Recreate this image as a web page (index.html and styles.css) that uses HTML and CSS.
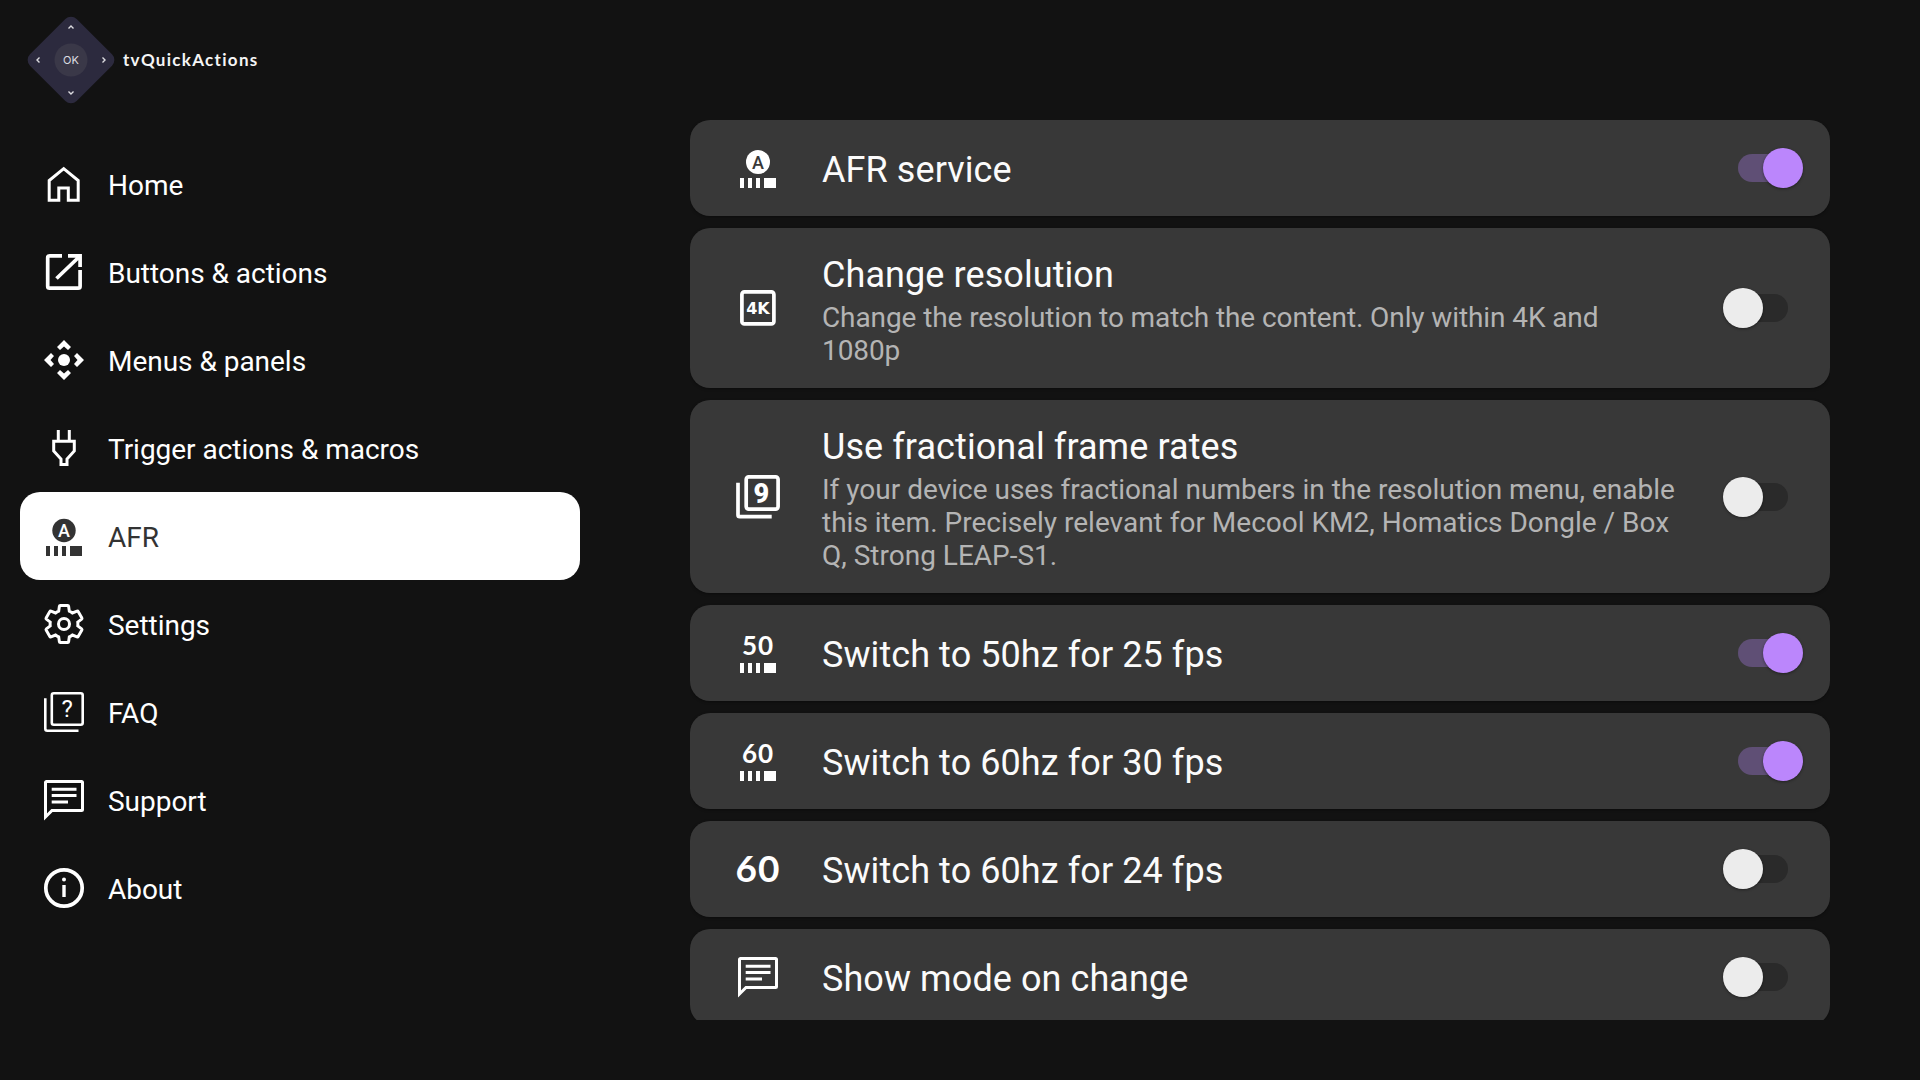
FILE: index.html
```html
<!DOCTYPE html>
<html lang="en">
<head>
<meta charset="utf-8">
<title>tvQuickActions</title>
<link rel="stylesheet" href="styles.css">
</head>
<body>
<div class="app">
  <aside class="sidebar">
    <div class="brand">
      <svg class="brand-logo" viewBox="0 0 88 88">
        <rect x="11" y="11" width="66" height="66" rx="8" transform="rotate(45 44 44)" fill="#2c2a3e"/>
        <circle cx="44" cy="44" r="16.5" fill="#3a3848"/>
        <text x="44" y="48" class="logo-ok">OK</text>
        <path d="M41.5 12.5 44 10 46.5 12.5M41.5 75.500 44 78 46.500 75.500M12.500 41.500 10 44 12.500 46.500M75.500 41.500 78 44 75.500 46.500" class="logo-chev"/>
      </svg>
      <span class="brand-name">tvQuickActions</span>
    </div>
    <nav class="nav">
      <a class="nav-item">
        <svg class="icon" viewBox="0 0 40 40"><path class="ln" d="M5.200 36.300V16.500L19.700 4.600 34.200 16.500V36.300H24.300V24H14.800V36.300Z"/></svg>
        <span>Home</span>
      </a>
      <a class="nav-item">
        <svg class="icon" viewBox="0 0 40 40"><path class="ln heavy" d="M18 3.800H5.700a2 2 0 0 0-2 2V34.200a2 2 0 0 0 2 2H34.100a2 2 0 0 0 2-2V18M24 3.800H36.100V15M36 4 12.500 26.500"/></svg>
        <span>Buttons &amp; actions</span>
      </a>
      <a class="nav-item">
        <svg class="icon" viewBox="0 0 40 40">
          <circle cx="20" cy="20" r="6" class="fl"/>
          <g class="fl">
            <path d="M20 0 27 7 24 10 20 6.500 16 10 13 7Z"/>
            <path d="M20 0 27 7 24 10 20 6.500 16 10 13 7Z" transform="rotate(90 20 20)"/>
            <path d="M20 0 27 7 24 10 20 6.500 16 10 13 7Z" transform="rotate(180 20 20)"/>
            <path d="M20 0 27 7 24 10 20 6.500 16 10 13 7Z" transform="rotate(270 20 20)"/>
          </g>
        </svg>
        <span>Menus &amp; panels</span>
      </a>
      <a class="nav-item">
        <svg class="icon" viewBox="0 0 40 40"><path class="ln" d="M9.700 13.300H30.300V23L23 31V36.500H17V31L9.700 23ZM14.300 2V13M25.300 2V13"/></svg>
        <span>Trigger actions &amp; macros</span>
      </a>
      <a class="nav-item active">
        <svg class="icon" viewBox="0 0 40 40">
          <circle cx="20" cy="14.500" r="11.700" class="fl"/>
          <text x="20" y="21" class="afr-a">A</text>
          <path class="fl" d="M2 30H6V40H2ZM10 30H14V40H10ZM18 30H22V40H18ZM26 30H38V40H26Z"/>
        </svg>
        <span>AFR</span>
      </a>
      <a class="nav-item">
        <svg class="icon" viewBox="0 0 40 40">
          <path class="ln gear" transform="translate(20 20) scale(1.850) translate(-12 -12)" d="M19.430 12.980c.04-.32.07-.64.07-.98s-.03-.66-.07-.98l2.110-1.650c.19-.15.24-.42.12-.64l-2-3.460c-.12-.22-.39-.3-.61-.22l-2.490 1c-.52-.4-1.080-.73-1.690-.98l-.38-2.650C14.460 2.180 14.250 2 14 2h-4c-.25 0-.46.18-.49.42l-.38 2.650c-.61.25-1.170.59-1.690.98l-2.490-1c-.23-.09-.49 0-.61.22l-2 3.460c-.13.22-.07.49.12.64l2.110 1.650c-.04.32-.07.65-.07.98s.03.66.07.98l-2.110 1.650c-.19.15-.24.42-.12.64l2 3.460c.12.22.39.3.61.22l2.490-1c.52.4 1.080.73 1.690.98l.38 2.650c.03.24.24.42.49.42h4c.25 0 .46-.18.49-.42l.38-2.650c.61-.25 1.170-.59 1.690-.98l2.490 1c.23.09.49 0 .61-.22l2-3.460c.12-.22.07-.49-.12-.64l-2.110-1.650z"/>
          <circle class="ln" cx="20" cy="20" r="5.500"/>
        </svg>
        <span>Settings</span>
      </a>
      <a class="nav-item">
        <svg class="icon" viewBox="0 0 40 40">
          <rect class="ln thin" x="7.800" y="1.300" width="30.900" height="31.400" rx="2"/>
          <path class="ln thin" d="M1.300 6.300V36.700a2 2 0 0 0 2 2H34.500"/>
          <text x="23.200" y="25" class="faq-q">?</text>
        </svg>
        <span>FAQ</span>
      </a>
      <a class="nav-item">
        <svg class="icon" viewBox="0 0 40 40">
          <path class="ln" d="M1.500 2.500a1 1 0 0 1 1-1H37.500a1 1 0 0 1 1 1V29.500a1 1 0 0 1-1 1H8L1.500 37ZM7.700 9.300H32.500M7.700 15.500H32.500M7.700 22H24"/>
        </svg>
        <span>Support</span>
      </a>
      <a class="nav-item">
        <svg class="icon" viewBox="0 0 40 40">
          <circle class="ln heavy" cx="20" cy="20" r="18.200"/>
          <circle class="fl" cx="20" cy="11.500" r="2"/>
          <path class="fl" d="M18.300 17H21.700V29H18.300Z"/>
        </svg>
        <span>About</span>
      </a>
    </nav>
  </aside>

  <main class="content">
    <div class="list">
      <section class="card">
        <svg class="icon" viewBox="0 0 40 40">
          <circle cx="20" cy="14" r="12" class="fl"/>
          <text x="20" y="20.500" class="afr-a">A</text>
          <path class="fl" d="M2 30H6V40H2ZM10 30H14V40H10ZM18 30H22V40H18ZM26 30H38V40H26Z"/>
        </svg>
        <div class="text"><div class="title">AFR service</div></div>
        <div class="switch on"><i class="track"></i><i class="thumb"></i></div>
      </section>

      <section class="card">
        <svg class="icon" viewBox="0 0 40 40">
          <rect class="ln heavy" x="3.900" y="3.900" width="32" height="32" rx="2.500"/>
          <text x="20" y="25.800" class="chip-4k">4K</text>
        </svg>
        <div class="text">
          <div class="title">Change resolution</div>
          <div class="sub tight">Change the resolution to match the content. Only within 4K and 1080p</div>
        </div>
        <div class="switch"><i class="track"></i><i class="thumb"></i></div>
      </section>

      <section class="card">
        <svg class="icon" viewBox="0 0 40 40">
          <rect class="ln heavy" x="8.200" y="-.100" width="31.900" height="32.200" rx="2.500"/>
          <path class="ln heavy" d="M0 5.700V38a1.700 1.700 0 0 0 1.700 1.700H33.700"/>
          <text x="23.400" y="25.800" class="chip-9">9</text>
        </svg>
        <div class="text">
          <div class="title">Use fractional frame rates</div>
          <div class="sub">If your device uses fractional numbers in the resolution menu, enable this item. Precisely relevant for Mecool KM2, Homatics Dongle / Box Q, Strong LEAP-S1.</div>
        </div>
        <div class="switch"><i class="track"></i><i class="thumb"></i></div>
      </section>

      <section class="card">
        <svg class="icon" viewBox="0 0 40 40">
          <text x="20" y="22" class="hz">50</text>
          <path class="fl" d="M2 30H6V40H2ZM10 30H14V40H10ZM18 30H22V40H18ZM26 30H38V40H26Z"/>
        </svg>
        <div class="text"><div class="title">Switch to 50hz for 25 fps</div></div>
        <div class="switch on"><i class="track"></i><i class="thumb"></i></div>
      </section>

      <section class="card">
        <svg class="icon" viewBox="0 0 40 40">
          <text x="20" y="22" class="hz">60</text>
          <path class="fl" d="M2 30H6V40H2ZM10 30H14V40H10ZM18 30H22V40H18ZM26 30H38V40H26Z"/>
        </svg>
        <div class="text"><div class="title">Switch to 60hz for 30 fps</div></div>
        <div class="switch on"><i class="track"></i><i class="thumb"></i></div>
      </section>

      <section class="card">
        <svg class="icon" viewBox="0 0 40 40">
          <text x="20" y="33" class="hz-big">60</text>
        </svg>
        <div class="text"><div class="title">Switch to 60hz for 24 fps</div></div>
        <div class="switch"><i class="track"></i><i class="thumb"></i></div>
      </section>

      <section class="card">
        <svg class="icon" viewBox="0 0 40 40">
          <path class="ln" d="M1.500 2.500a1 1 0 0 1 1-1H37.500a1 1 0 0 1 1 1V29.500a1 1 0 0 1-1 1H8L1.500 37ZM7.700 9.300H32.500M7.700 15.500H32.500M7.700 22H24"/>
        </svg>
        <div class="text"><div class="title">Show mode on change</div></div>
        <div class="switch"><i class="track"></i><i class="thumb"></i></div>
      </section>
    </div>
  </main>
</div>
</body>
</html>
```
FILE: styles.css
```css
* { box-sizing: border-box; }

html, body {
  margin: 0;
  height: 100%;
  background: #121212;
}

body {
  font-family: Roboto, "Liberation Sans", sans-serif;
  color: #fff;
}

.app {
  display: flex;
  height: 1080px;
  overflow: hidden;
  background: #121212;
}

/* Sidebar */
.sidebar {
  flex: none;
  width: 580px;
  padding: 16px 0 0 20px;
}

.brand {
  display: flex;
  align-items: center;
  gap: 8px;
  height: 88px;
  margin-bottom: 36px;
  padding-left: 7px;
}

.brand-logo {
  width: 88px;
  height: 88px;
  flex: none;
}

.logo-ok {
  font-family: Inter, sans-serif;
  font-size: 11px;
  fill: #dcdce0;
  text-anchor: middle;
}

.logo-chev {
  fill: none;
  stroke: #dcdce0;
  stroke-width: 1.400;
}

.brand-name {
  margin-bottom: 1px;
  font-family: Lato, sans-serif;
  font-size: 17px;
  font-weight: 700;
  letter-spacing: 1.300px;
  color: #f5f5f5;
}

.nav {
  display: flex;
  flex-direction: column;
}

.nav-item {
  display: flex;
  align-items: center;
  gap: 24px;
  height: 88px;
  padding-left: 24px;
  border-radius: 20px;
  font-size: 28px;
  color: #fff;
  --knock: #121212;
}

.nav-item span {
  margin-top: 2px;
  letter-spacing: -.03px;
}

.nav-item.active {
  background: #fff;
  color: #333;
  --knock: #fff;
}

/* Icons */
.icon {
  flex: none;
  width: 40px;
  height: 40px;
  overflow: visible;
}

.ln {
  fill: none;
  stroke: currentColor;
  stroke-width: 3;
}

.ln.thin { stroke-width: 2.600; }
.ln.heavy { stroke-width: 3.700; }
.ln.gear { stroke-width: 1.600; }

.fl { fill: currentColor; }

.afr-a {
  font-family: Roboto, sans-serif;
  font-size: 18px;
  font-weight: 500;
  fill: var(--knock);
  text-anchor: middle;
}

.faq-q {
  font-family: Roboto, sans-serif;
  font-size: 24px;
  fill: currentColor;
  text-anchor: middle;
}

.chip-4k {
  font-family: "DejaVu Sans", sans-serif;
  font-size: 16px;
  font-weight: 700;
  fill: currentColor;
  text-anchor: middle;
}

.chip-9 {
  font-family: Roboto, sans-serif;
  font-size: 27px;
  font-weight: 900;
  fill: currentColor;
  text-anchor: middle;
}

.hz {
  font-family: Lato, sans-serif;
  font-size: 26px;
  font-weight: 700;
  letter-spacing: .8px;
  fill: currentColor;
  text-anchor: middle;
}

.hz-big {
  font-family: Lato, sans-serif;
  font-size: 37px;
  font-weight: 700;
  letter-spacing: 1px;
  fill: currentColor;
  text-anchor: middle;
}

/* Content */
.content {
  flex: none;
  width: 1140px;
  margin-left: 110px;
  padding-top: 120px;
}

.list {
  display: flex;
  flex-direction: column;
  gap: 12px;
  height: 900px;
  overflow: hidden;
}

.card {
  flex: none;
  display: flex;
  align-items: center;
  min-height: 96px;
  padding: 0 27px 0 48px;
  border-radius: 20px;
  background: #383838;
  color: #fff;
  --knock: #383838;
  box-shadow: 0 1px 3px rgba(0, 0, 0, .35);
}

.text {
  flex: 1;
  min-width: 0;
  margin: 0 43px 0 44px;
  padding: 24px 0 21px;
}

.title {
  font-size: 36px;
  line-height: 46px;
  letter-spacing: .08px;
  color: #fbfbfb;
}

.sub {
  margin-top: 3px;
  font-size: 28px;
  line-height: 33px;
  letter-spacing: 0;
  color: #b4b4b4;
}

.sub.tight { letter-spacing: -.1px; }

/* Switch */
.switch {
  position: relative;
  flex: none;
  width: 80px;
  height: 40px;
}

.track {
  position: absolute;
  left: 15px;
  top: 6px;
  width: 50px;
  height: 28px;
  border-radius: 14px;
  background: #2a2a2a;
}

.thumb {
  position: absolute;
  left: 0;
  top: 0;
  width: 40px;
  height: 40px;
  border-radius: 50%;
  background: #ececec;
  box-shadow: 0 1px 3px rgba(0, 0, 0, .4);
}

.switch.on .track { background: #5f4f75; }
.switch.on .thumb {
  left: 40px;
  background: #bb86fc;
}
```
